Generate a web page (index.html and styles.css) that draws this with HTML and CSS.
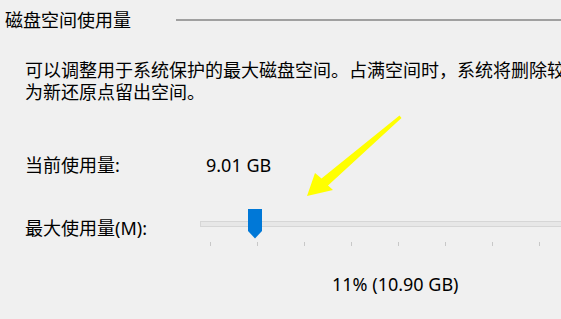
FILE: index.html
```html
<!DOCTYPE html>
<html lang="zh-CN">
<head>
<meta charset="utf-8">
<title>磁盘空间使用量</title>
<link rel="stylesheet" href="styles.css">
</head>
<body>
<div class="group">
  <div class="legend">
    <span class="legend-text">磁盘空间使用量</span>
    <span class="rule"></span>
  </div>
  <div class="desc">
    <div class="desc-line">可以调整用于系统保护的最大磁盘空间。占满空间时，系统将删除较</div>
    <div class="desc-line">为新还原点留出空间。</div>
  </div>
  <div class="row current">
    <span class="label">当前使用量:</span>
    <span class="value">9.01 GB</span>
  </div>
  <div class="row max">
    <span class="label">最大使用量(M):</span>
    <div class="slider">
      <div class="track"></div>
      <svg class="thumb" width="14" height="30" viewBox="0 0 14 30"><path d="M0 0H14V22L7 29.5L0 22Z" fill="#0078d7"/></svg>
      <div class="ticks">
        <span class="tick"></span><span class="tick"></span><span class="tick"></span><span class="tick"></span>
        <span class="tick"></span><span class="tick"></span><span class="tick"></span><span class="tick"></span>
      </div>
    </div>
  </div>
  <div class="percent">11% (10.90 GB)</div>
</div>
<svg class="arrow" width="561" height="319" viewBox="0 0 561 319">
  <path d="M307 196 L315 173 L321.5 178.5 L399.5 115.5 L401.5 118 L328 185.5 L333 190 Z" fill="#ffff00"/>
</svg>
</body>
</html>
```

FILE: styles.css
```css
html, body {
  margin: 0;
  padding: 0;
}
body {
  width: 561px;
  height: 319px;
  overflow: hidden;
  background: #f0f0f0;
  color: #000;
  font-family: "Noto Sans", "Noto Sans CJK SC", sans-serif;
  font-size: 18px;
  position: relative;
}
.group {
  display: flex;
  flex-direction: column;
}
.legend {
  display: flex;
  align-items: center;
  padding-top: 8px;
  padding-left: 5px;
  height: 24px;
  line-height: 24px;
  white-space: nowrap;
}
.legend-text {
  width: 171px;
  flex: none;
}
.rule {
  flex: 1;
  height: 2px;
  background: #a0a0a0;
}
.desc {
  margin-top: 27px;
  padding-left: 25px;
  line-height: 22px;
  white-space: nowrap;
}
.row {
  display: flex;
  padding-left: 25px;
  white-space: nowrap;
}
.current {
  margin-top: 50px;
  line-height: 24px;
}
.label {
  flex: none;
  width: 181px;
}
.max {
  margin-top: 32px;
  align-items: flex-start;
}
.max .label {
  width: 175px;
  margin-top: 7px;
  line-height: 24px;
}
.slider {
  position: relative;
  flex: none;
  width: 380px;
  height: 40px;
}
.track {
  margin-top: 12px;
  height: 4px;
  background: #e7e7e7;
  border: 1px solid #d6d6d6;
}
.thumb {
  position: absolute;
  left: 48px;
  top: 0;
  display: block;
}
.ticks {
  display: flex;
  gap: 46px;
  padding-left: 10px;
  margin-top: 15px;
}
.tick {
  width: 1px;
  height: 4px;
  background: #c8c8c8;
}
.percent {
  margin-top: 23px;
  padding-left: 332px;
  line-height: 24px;
  white-space: nowrap;
}
.arrow {
  position: absolute;
  left: 0;
  top: 0;
  pointer-events: none;
}
```
